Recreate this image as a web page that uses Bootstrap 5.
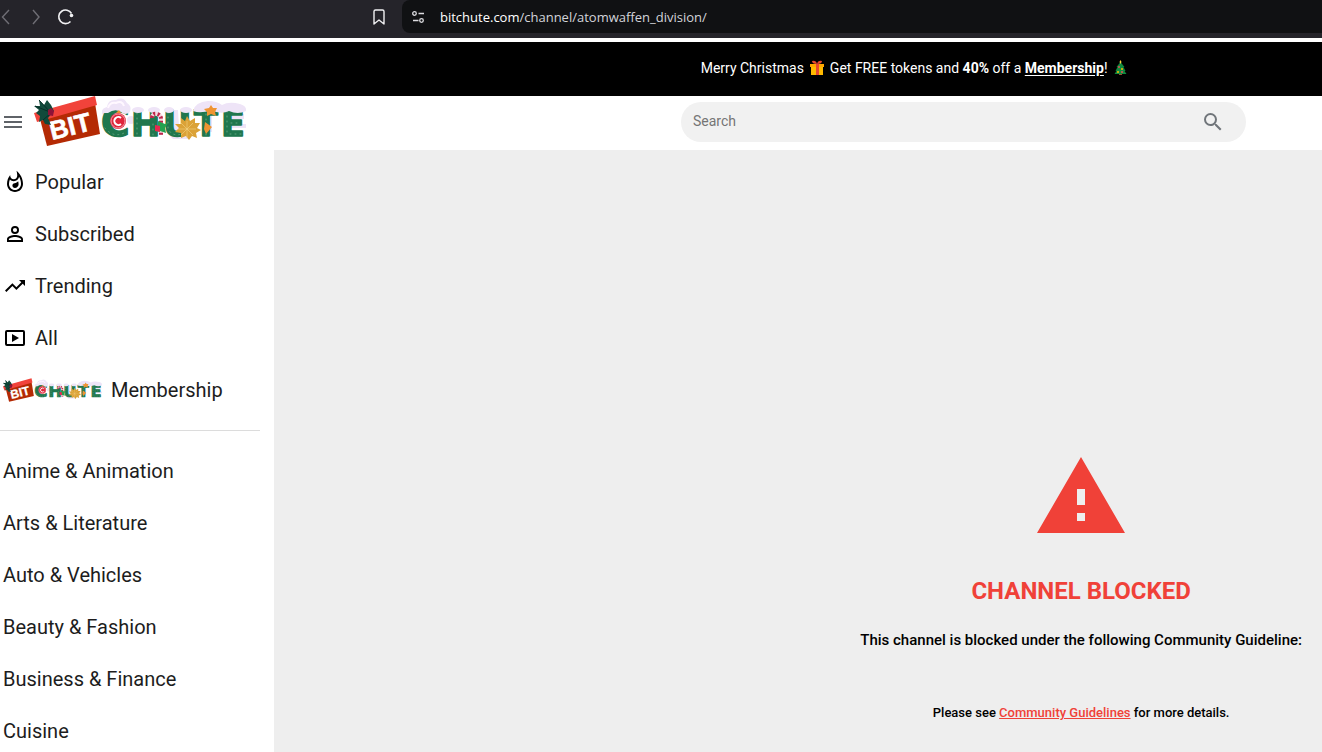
<!DOCTYPE html>
<html lang="en">
<head>
<meta charset="utf-8">
<meta name="viewport" content="width=device-width, initial-scale=1">
<title>BitChute</title>
<link href="https://cdn.jsdelivr.net/npm/bootstrap@5.3.0/dist/css/bootstrap.min.css" rel="stylesheet">
<style>
body { font-family: Roboto, "Liberation Sans", sans-serif; color: #000; background: #fff; }
svg { display: block; flex: none; }
.browser-bar { height: 38px; background: #25242a; }
.tool-btn { padding: 0; border: 0; background: none; color: #f1f1f3; }
.tool-btn:disabled { color: #6f6e75; opacity: 1; }
.tool-group { width: 402px; padding: 0 15px 4px 0; }
.address { height: 33px; padding: 0 10px; background: #101113; border-radius: 8px 0 0 8px; color: #dcdce0; }
.address-link { color: #d3d4da; font: 13px/20px "Open Sans", "Noto Sans", sans-serif; }
.address-host { color: #fff; }
.promo { height: 54px; margin-top: 4px; padding: 0 194px 2px 0; background: #000; color: #fff; font-size: 14px; white-space: pre; }
.promo svg { display: inline-block; vertical-align: -3px; margin: 0 1px; }
.promo a { color: #fff; font-weight: 700; text-underline-offset: 2px; }
.site-head { height: 54px; padding: 0 76px 2px 0; }
.menu-btn { padding: 0; margin: 0 11px 0 3px; border: 0; background: none; }
.search-box { width: 565px; height: 40px; padding: 0 21px 0 12px; border-radius: 20px; background: #f1f1f1; }
.search-box input { min-width: 0; border: 0; outline: 0; background: none; padding: 0 0 2px; font-size: 14px; line-height: 20px; }
.search-box input::placeholder { color: #757575; opacity: 1; }
.search-box button { padding: 0; border: 0; background: none; }
.side-nav { width: 274px; padding-top: 6px; }
.side-link { height: 52px; padding-left: 3px; gap: 8px; color: #1d1d1d; font-size: 20px; text-decoration: none; }
.side-rule { width: 260px; margin: 14px 0; border-color: #dcdcdc; opacity: 1; }
.stage { background: #eee; padding: 307px 20px 0 0; }
.notice h1 { margin: 44px 0 24px; font-size: 24px; line-height: 28px; font-weight: 700; }
.notice p { margin: 0; font-size: 15px; line-height: 22px; font-weight: 500; }
.notice .more-info { margin-top: 52px; font-size: 13px; line-height: 20px; }
.alert-red, .notice a { color: #f04138; }
</style>
</head>
<body class="d-flex flex-column vh-100 overflow-hidden">

<header class="browser-bar d-flex flex-shrink-0">
  <div class="tool-group d-flex align-items-center flex-shrink-0">
    <button class="tool-btn" disabled aria-label="Back"><svg width="30" height="18" viewBox="0 0 30 18" fill="none" stroke="currentColor" stroke-width="1.4"><path d="M9 2 2.500 9 9 16"/></svg></button>
    <button class="tool-btn" disabled aria-label="Forward"><svg width="26" height="18" viewBox="0 0 26 18" fill="none" stroke="currentColor" stroke-width="1.4"><path d="M3 2 9 9 3 16"/></svg></button>
    <button class="tool-btn" aria-label="Reload"><svg width="20" height="18" viewBox="0 0 20 18" fill="none" stroke="currentColor" stroke-width="1.6"><path d="M15.500 5.500A6.800 6.800 0 1 0 14.500 13.500"/><circle cx="15.500" cy="7.500" r="1.800" fill="currentColor" stroke="none"/></svg></button>
    <button class="tool-btn ms-auto" aria-label="Bookmark"><svg width="16" height="18" viewBox="0 0 16 18" fill="none" stroke="currentColor" stroke-width="1.4" stroke-linejoin="round"><path d="M3 3.500Q3 2 4.500 2h7Q13 2 13 3.500V16l-5-4-5 4Z"/></svg></button>
  </div>
  <div class="address d-flex align-items-center flex-grow-1">
    <svg width="12" height="12" viewBox="0 0 12 12" fill="none" stroke="currentColor" stroke-width="1.3"><circle cx="2.500" cy="2.500" r="1.800"/><path d="M6.500 2.500H12M1 9.500h5.500"/><circle cx="9.500" cy="9.500" r="1.800"/></svg>
    <a class="address-link text-decoration-none ps-3 flex-grow-1" href="#"><span class="address-host">bitchute.com</span>/channel/atomwaffen_division/</a>
  </div>
</header>

<div class="promo d-flex align-items-center justify-content-end flex-shrink-0">
  <div><span>Merry Christmas </span><svg width="17" height="16" viewBox="0 0 17 16"><path d="M3 5h12v10H3Z" fill="#ffb900"/><path d="M2 4h14v3H2Z" fill="#ffa600"/><path d="M8 4h3v11H8Z" fill="#e7482f"/><path d="M9 4Q4 4 4 1q4-1 5 3 1-4 5-3 0 3-5 3" fill="#e7482f"/></svg><span> Get FREE tokens and <b>40%</b> off a <a href="#">Membership</a>! </span><svg width="15" height="16" viewBox="1 0 15 16"><path d="M8 13h3v2H8Z" fill="#8e562e"/><path d="m9.500 2 4 5-1 0 2 4-1 0 2 3H3.500l2-3-1 0 2-4-1 0Z" fill="#10893e"/><path d="m9.500 0 1 2-1 2-1-2Z" fill="#fcd53f"/><circle cx="8" cy="7" r="1" fill="#e74856"/><circle cx="11" cy="9" r="1" fill="#ffb900"/><circle cx="7" cy="12" r="1" fill="#ffb900"/><circle cx="11" cy="12" r="1" fill="#e74856"/></svg></div>
</div>

<div class="site-head d-flex align-items-center flex-shrink-0">
  <button class="menu-btn" aria-label="Menu"><svg width="20" height="14" viewBox="0 0 20 14" stroke="#5f6368" stroke-width="2"><path d="M1 2h18M1 7h18M1 12h18"/></svg></button>
  <a href="#" aria-label="BitChute home">
    <svg width="214" height="52" viewBox="0 0 214 52">
      <g id="logo">
        <path d="M5 19 61 7 66 38 13 50Z" fill="#b42a04"/>
        <path d="M0 17 61 0 63 9 3 26Z" fill="#f1433b"/>
        <text transform="rotate(-14 18 44)" x="18" y="44" font-family="Liberation Sans" font-weight="700" font-size="26" fill="#fff" stroke="#fff" stroke-width=".6">BIT</text>
        <path d="M5 4 10 9 13 4 17 9 20 15 14 22 17 29 11 28 9 24 5 26 6 20 2 17 5 14 0 10 6 10Z" fill="#114a3b"/>
        <path d="M5 4 17 17 9 24M1 10 16 16" stroke="#062d27" fill="none"/>
        <path d="M17 12 20 15 19 20 14 19 14 14Z" fill="#8d1238"/>
        <g fill="#eee4f7">
          <circle cx="97" cy="24" r="4"/><circle cx="72" cy="16" r="4"/>
          <path d="M137 14h7l1 17 4 3 6-1v10h-16l-8-8ZM173 16h5v20h-5ZM194 18h16v5h-16ZM194 28h18v4h-18Z"/>
        </g>
        <g font-family="DejaVu Sans" font-weight="700" fill="#20774e" stroke="#20774e" stroke-width="1.5" stroke-linejoin="round">
          <text x="67" y="40" font-size="39">C</text>
          <text x="97 129 160 187" y="40" font-size="35">HUTE</text>
        </g>
        <g fill="none" stroke="#5fa37c" stroke-width="1" stroke-dasharray="1 4" stroke-linecap="round">
          <path d="M71 32q9 11 21 4M103 17v22M119 28v12M134 16v16q3 9 14 6M172 18v22M193 15v24M196 38h13M197 27h10"/>
        </g>
        <path d="M69 17q-1-5 4-6 1-8 9-7 7-4 11 3 5 3 3 9-5 4-9 0-6-4-13 1Z" fill="#eee4f7"/>
        <path d="M74 12q2-6 8-5 6-3 8 3" fill="none" stroke="#fff8ff" stroke-width="2"/>
        <g fill="#eee4f7">
          <ellipse cx="104" cy="14" rx="6" ry="3"/><ellipse cx="120" cy="14" rx="6" ry="3"/><ellipse cx="135" cy="14" rx="5" ry="3"/><ellipse cx="152" cy="14" rx="6" ry="3"/>
          <path d="M159 15q2-9 15-10 9 0 14 4 7-4 18-1 7 2 6 7-8 4-17 0-8 4-18-1-10 4-18 1Z"/>
        </g>
        <circle cx="84" cy="25" r="8" fill="#e0263b"/><circle cx="84" cy="25" r="7" fill="none" stroke="#f29aa4"/>
        <path d="M87 22a4 4 0 1 0 0 6" fill="none" stroke="#fff" stroke-width="2"/>
        <path d="M82 17h5l-2-3Z" fill="#e9902d"/>
        <path d="M118 22q0-5 5-4 4 1 4 5v16" fill="none" stroke="#f3d8df" stroke-width="4"/>
        <path d="M118 22q0-5 5-4 4 1 4 5v16" fill="none" stroke="#bd2549" stroke-width="4" stroke-dasharray="2 2"/>
        <path d="m124 25 7 3 3-1-3 5 1 5-6-2-4 1 2-5Z" fill="#24a24f"/><path d="m121 29 5 1v6l-5-1Z" fill="#e6294e"/>
        <path d="m153 20 3 5 5-3 0 5 5 0-3 5 4 2-5 3 1 5-5-2-3 4-3-4-5 2 0-5-6-1 4-4-4-4 6 0 0-6 4 3Z" fill="#dba237"/>
        <g stroke="#f4d485" stroke-width=".6"><path d="M144 33h18M153 25v17M147 27l12 12M159 27 147 39"/></g>
        <path d="m177 9 2 3 4 0-2 4 1 4-5-2-4 2 0-4-3-3 5-1ZM171 26l7 5-6 7-2-5Z" fill="#ef9432"/>
      </g>
    </svg>
  </a>
  <form class="search-box d-flex align-items-center ms-auto">
    <input class="flex-grow-1" type="search" placeholder="Search" aria-label="Search">
    <button type="button" aria-label="Run search"><svg width="24" height="24" viewBox="0 0 24 24" fill="#70757a"><path d="M15.500 14h-.79l-.28-.27A6.471 6.471 0 0 0 16 9.500 6.500 6.500 0 1 0 9.500 16c1.610 0 3.090-.59 4.230-1.570l.27.28v.79l5 4.990L20.490 19l-4.990-5zm-6 0a4.500 4.500 0 1 1 0-9 4.500 4.500 0 0 1 0 9z"/></svg></button>
  </form>
</div>

<div class="d-flex flex-grow-1 overflow-hidden">
  <nav class="side-nav flex-shrink-0 overflow-hidden" aria-label="Main">
    <a class="side-link d-flex align-items-center" href="#"><svg width="24" height="24" viewBox="0 0 24 24"><path d="M11.570 13.160c-1.360.28-2.170 1.160-2.170 2.410 0 1.340 1.110 2.420 2.490 2.420 2.050 0 3.710-1.660 3.710-3.710 0-1.070-.15-2.120-.46-3.120-.79 1.070-2.200 1.720-3.570 2zM13.500.67s.74 2.650.74 4.800c0 2.060-1.350 3.730-3.410 3.730-2.070 0-3.630-1.670-3.630-3.730l.03-.36C5.210 7.510 4 10.620 4 14c0 4.420 3.580 8 8 8s8-3.580 8-8C20 8.610 17.410 3.800 13.500.67zM12 20c-3.310 0-6-2.690-6-6 0-1.530.3-3.040.86-4.430 1.010 1.010 2.410 1.630 3.970 1.630 2.660 0 4.750-1.830 5.280-4.430C17.340 8.970 18 11.440 18 14c0 3.310-2.690 6-6 6z"/></svg>Popular</a>
    <a class="side-link d-flex align-items-center" href="#"><svg width="24" height="24" viewBox="0 0 24 24"><path d="M12 5.900a2.100 2.100 0 1 1 0 4.200 2.100 2.100 0 0 1 0-4.200m0 9c2.970 0 6.100 1.460 6.100 2.100v1.100H5.900V17c0-.64 3.130-2.100 6.100-2.100M12 4a4 4 0 1 0 0 8 4 4 0 0 0 0-8Zm0 9c-2.670 0-8 1.340-8 4v3h16v-3c0-2.660-5.330-4-8-4Z"/></svg>Subscribed</a>
    <a class="side-link d-flex align-items-center" href="#"><svg width="24" height="24" viewBox="0 0 24 24"><path d="m16 6 2.290 2.290-4.880 4.880-4-4L2 16.590 3.410 18l6-6 4 4 6.300-6.290L22 12V6Z"/></svg>Trending</a>
    <a class="side-link d-flex align-items-center" href="#"><svg width="24" height="24" viewBox="0 0 24 24"><rect x="3" y="5" width="18" height="14" rx="1" fill="none" stroke="#000" stroke-width="2"/><path d="M9 8v8l7-4Z"/></svg>All</a>
    <a class="side-link d-flex align-items-center" href="#"><svg width="100" height="25" viewBox="0 0 214 52" aria-hidden="true"><use href="#logo"/></svg>Membership</a>
    <hr class="side-rule">
    <a class="side-link d-flex align-items-center" href="#">Anime &amp; Animation</a>
    <a class="side-link d-flex align-items-center" href="#">Arts &amp; Literature</a>
    <a class="side-link d-flex align-items-center" href="#">Auto &amp; Vehicles</a>
    <a class="side-link d-flex align-items-center" href="#">Beauty &amp; Fashion</a>
    <a class="side-link d-flex align-items-center" href="#">Business &amp; Finance</a>
    <a class="side-link d-flex align-items-center" href="#">Cuisine</a>
  </nav>
  <main class="stage flex-grow-1 d-flex justify-content-end align-items-start">
    <section class="notice text-center">
      <svg class="mx-auto" width="88" height="76" viewBox="0 0 88 76"><path d="M0 76h88L44 0ZM48 64h-8v-8h8Zm0-16h-8V32h8Z" fill="#f04138"/></svg>
      <h1 class="alert-red">CHANNEL BLOCKED</h1>
      <p>This channel is blocked under the following Community Guideline:</p>
      <p class="more-info">Please see <a href="#">Community Guidelines</a> for more details.</p>
    </section>
  </main>
</div>
<script src="https://cdn.jsdelivr.net/npm/bootstrap@5.3.0/dist/js/bootstrap.bundle.min.js"></script>
</body>
</html>
